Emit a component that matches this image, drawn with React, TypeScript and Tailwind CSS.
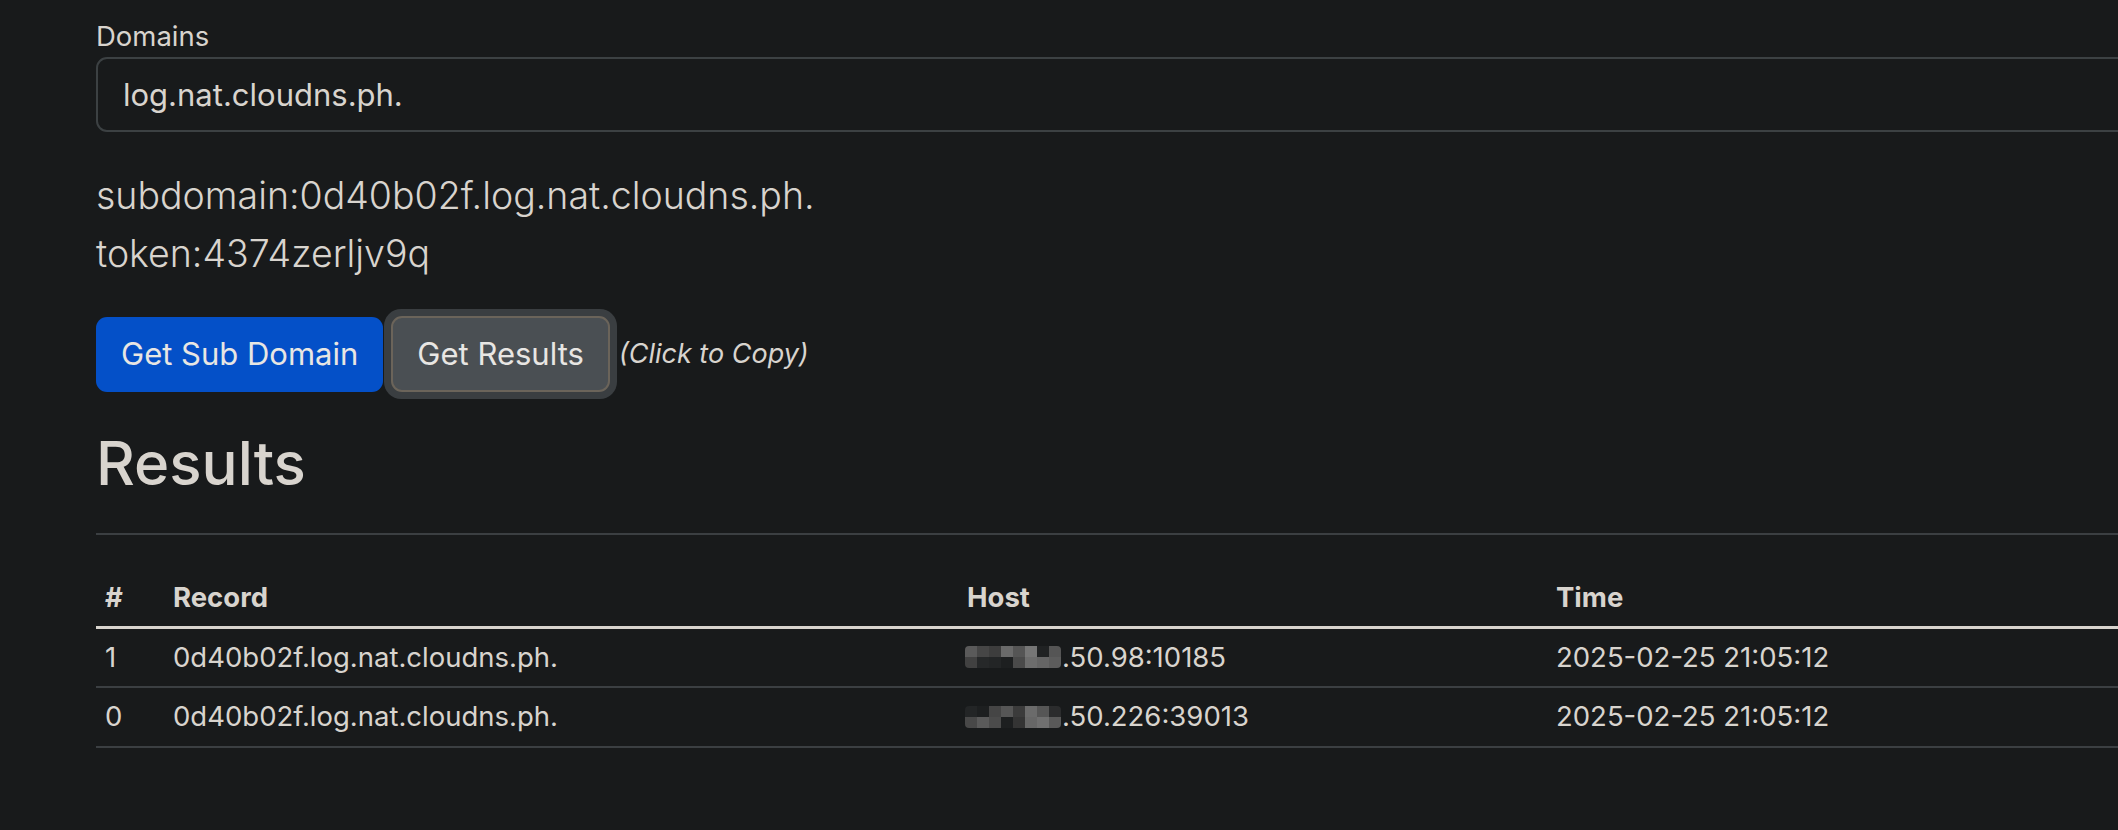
import React from "react";

const font = "font-['Inter','Noto_Sans',sans-serif]";

const rows = [
  {
    id: "1",
    record: "0d40b02f.log.nat.cloudns.ph.",
    host: ".50.98:10185",
    time: "2025-02-25 21:05:12",
    blur: [
      ["#5a5a5a", "#464646", "#3d3d3d", "#6a6a6a", "#555555", "#767676", "#202223", "#555555"],
      ["#414141", "#262829", "#232526", "#1d1f20", "#4a4a4a", "#6d6d6d", "#656565", "#5c5c5c"],
    ],
  },
  {
    id: "0",
    record: "0d40b02f.log.nat.cloudns.ph.",
    host: ".50.226:39013",
    time: "2025-02-25 21:05:12",
    blur: [
      ["#232526", "#1d1f20", "#454545", "#565656", "#3b3b3b", "#6b6b6b", "#565656", "#2b2c2d"],
      ["#484848", "#5a5a5a", "#4b4b4b", "#1d1f20", "#343434", "#676767", "#707070", "#595959"],
    ],
  },
];

const Blurred = ({ blocks }: { blocks: string[][] }) => (
  <span className="inline-flex flex-col overflow-hidden rounded-[4px] align-middle mr-[1px] -mt-[4px]">
    {blocks.map((line, i) => (
      <span key={i} className="flex">
        {line.map((c, j) => (
          <span key={j} className="block w-[12px] h-[11px]" style={{ backgroundColor: c }} />
        ))}
      </span>
    ))}
  </span>
);

export default function App() {
  return (
    <div className={`w-[2118px] min-h-[830px] overflow-hidden bg-[#181a1b] text-[#d8d4ce] ${font}`}>
      <div className="w-[2300px] pl-[96px] pt-[18px]">
        <label className="block text-[27.5px] leading-[37px] mb-[2px]">Domains</label>
        <input
          readOnly
          value="log.nat.cloudns.ph."
          className={`block w-full h-[75px] px-[25px] bg-[#181a1b] border-2 border-[#3c4143] rounded-[11px] text-[31px] text-[#d8d4ce] outline-none ${font}`}
        />

        <div className="mt-[35px] text-[37.5px] font-light leading-[58px]">
          <p>subdomain:0d40b02f.log.nat.cloudns.ph.</p>
          <p>token:4374zerljv9q</p>
        </div>

        <div className="mt-[26px] flex items-center">
          <button className="h-[75px] px-[25px] rounded-[11px] bg-[#0450c8] text-[31px] text-[#e8e6e3]">
            Get Sub Domain
          </button>
          <div className="ml-[1px] p-[7px] rounded-[17px] bg-[#3a3e41]">
            <button className="h-[76px] px-[24px] rounded-[11px] bg-[#4a4f53] border-2 border-[#6b645a] text-[31px] text-[#e8e6e3]">
              Get Results
            </button>
          </div>
          <span className="ml-[2px] text-[27px] italic">(Click to Copy)</span>
        </div>

        <h1 className="mt-[27px] text-[60px] font-medium leading-[75px]">Results</h1>

        <hr className="mt-[32px] border-0 h-[2px] bg-[#3b3f42]" />

        <table className="mt-[35px] w-full table-fixed border-collapse text-[27.5px]">
          <colgroup>
            <col className="w-[68px]" />
            <col className="w-[794px]" />
            <col className="w-[589px]" />
            <col />
          </colgroup>
          <thead>
            <tr className="h-[57px] border-b-[3px] border-[#d8d4ce]">
              <th className="text-left font-bold pl-[9px]">#</th>
              <th className="text-left font-bold pl-[9px]">Record</th>
              <th className="text-left font-bold pl-[9px]">Host</th>
              <th className="text-left font-bold pl-[9px]">Time</th>
            </tr>
          </thead>
          <tbody>
            {rows.map((r) => (
              <tr key={r.id} className="h-[60px] border-b-2 border-[#3b3f42]">
                <td className="pl-[9px]">{r.id}</td>
                <td className="pl-[9px]">{r.record}</td>
                <td className="pl-[7px] whitespace-nowrap">
                  <Blurred blocks={r.blur} />
                  {r.host}
                </td>
                <td className="pl-[9px]">{r.time}</td>
              </tr>
            ))}
          </tbody>
        </table>
      </div>
    </div>
  );
}
